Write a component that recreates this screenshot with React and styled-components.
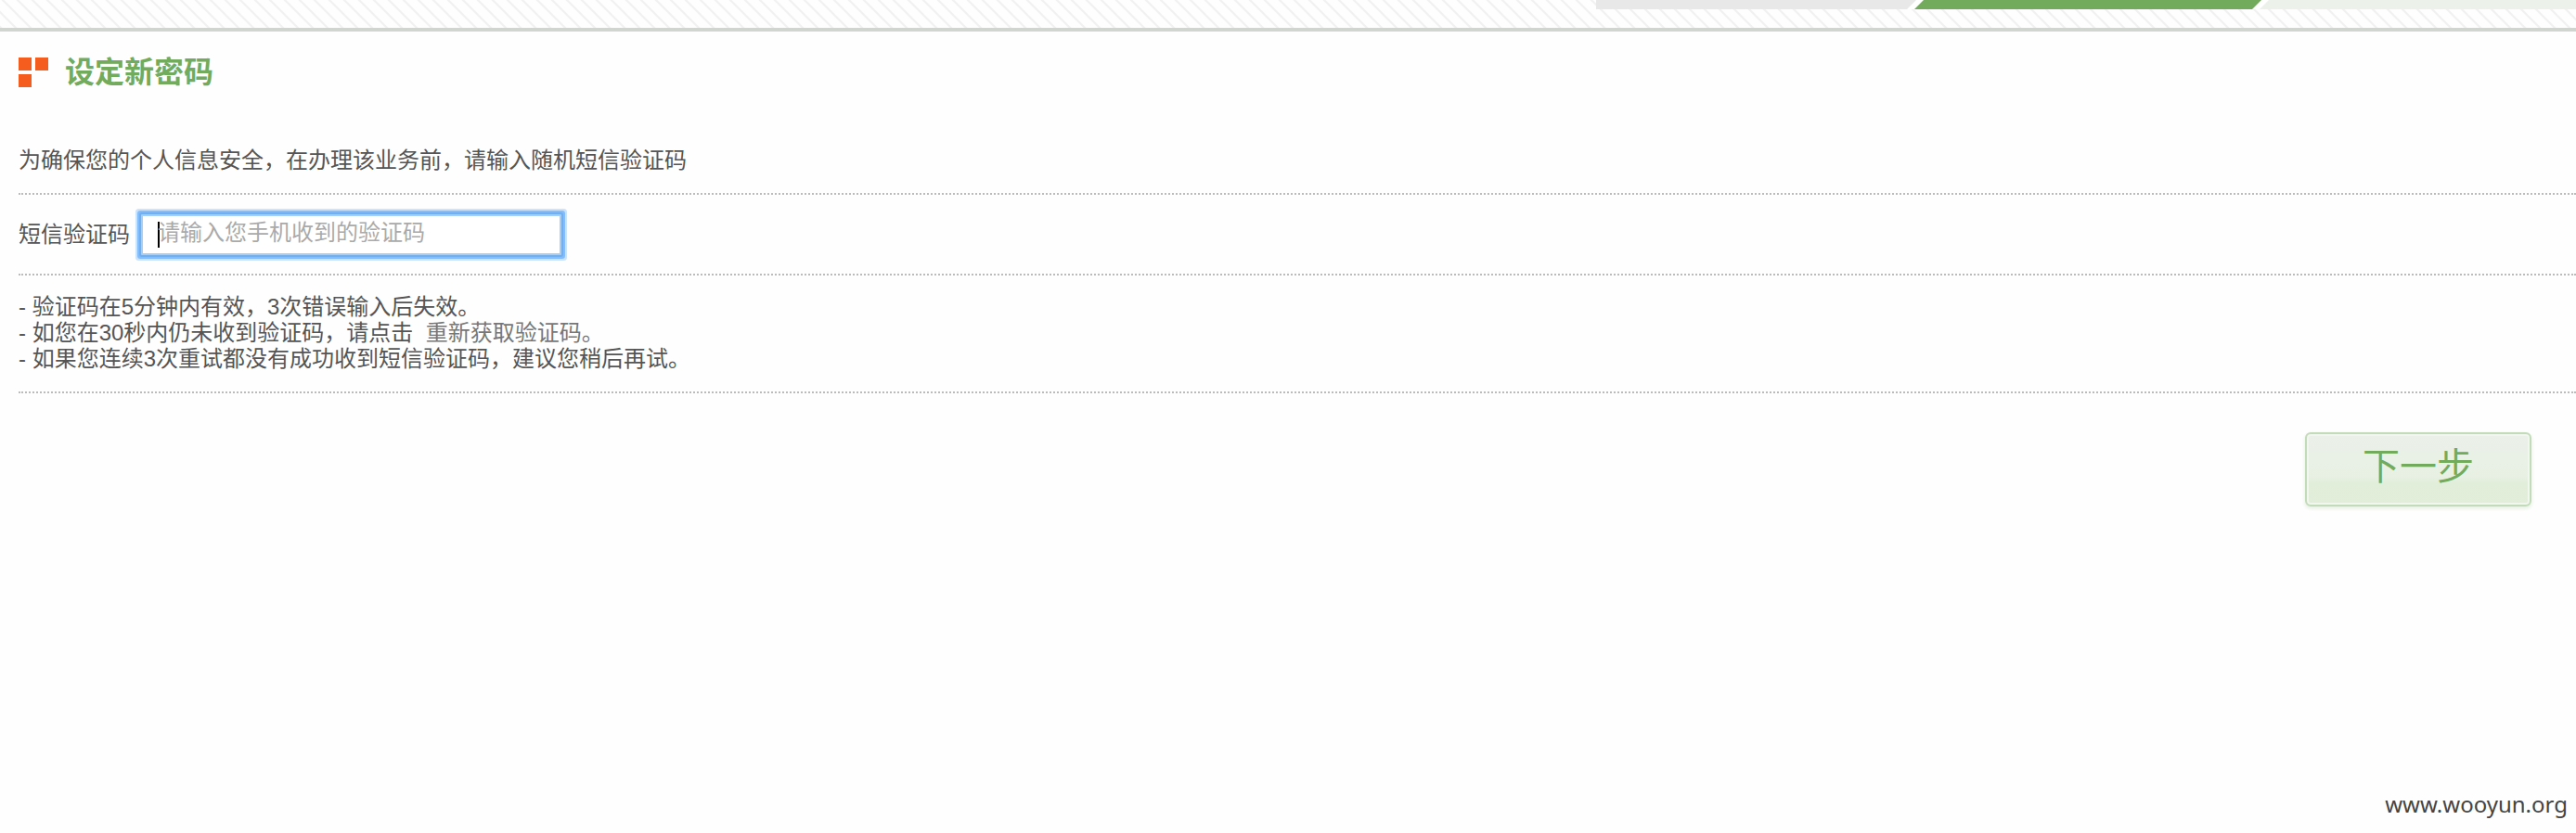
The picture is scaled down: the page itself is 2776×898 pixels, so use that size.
import React from "react";
import styled, { createGlobalStyle } from "styled-components";

const GlobalStyle = createGlobalStyle`
  * { box-sizing: border-box; }
  body {
    margin: 0;
    background: #fefefe;
    color: #555;
    font: 24px/28px "Liberation Sans", "Noto Sans CJK SC", sans-serif;
  }
  #root { min-height: 100vh; display: flex; }
`;

const Page = styled.div`
  flex: 1;
  min-height: 100vh;
  display: flex;
  flex-direction: column;
`;

const StepBar = styled.header`
  height: 34px;
  border-bottom: 4px solid #d0d5cf;
  display: flex;
  justify-content: flex-end;
  align-items: flex-start;
  overflow: hidden;
  background: url("data:image/svg+xml,%3Csvg xmlns='http://www.w3.org/2000/svg' width='16' height='16'%3E%3Crect width='16' height='16' fill='%23fefefe'/%3E%3Cpath d='M-4 -4L20 20M-4 12L4 20M12 -4L20 4' stroke='%23f1f1f1' stroke-width='2'/%3E%3C/svg%3E") 3px 0;
`;

const Steps = styled.svg`
  display: block;
  width: 1056px;
  height: 10px;
  flex: none;
`;

const Main = styled.main`
  padding-left: 20px;
`;

const Title = styled.h1`
  margin: 0;
  padding: 22px 0 0;
  height: 108px;
  display: flex;
  align-items: flex-start;
  gap: 18px;
  color: #71ab5b;
  font-size: 32px;
  line-height: 44px;
  font-weight: 700;
  svg { margin-top: 6px; }
`;

const Section = styled.section`
  padding: ${(p) => p.$pad};
  border-bottom: 2px dotted #bbb;
  p { margin: 0; }
`;

const Field = styled.div`
  display: flex;
  align-items: center;
  gap: 12px;
`;

const CodeInput = styled.input`
  width: 453px;
  height: 44px;
  margin: 0;
  padding: 0 16px 4px;
  border: 2px solid #a5cffb;
  outline: none;
  background: #fff;
  box-shadow: 0 0 0 2px #70b0f2, 0 0 0 4px #84bdfa, 0 0 0 6px #cce3fd;
  border-radius: 1px;
  font: inherit;
  color: #555;
  caret-color: #000;
  &::placeholder { color: #aaa; opacity: 1; }
  &:placeholder-shown {
    caret-color: transparent;
    background: linear-gradient(#000, #000) 16px 6px / 2px 28px no-repeat #fff;
  }
`;

const Notes = styled.ul`
  list-style: none;
  margin: 0;
  padding: 0;
`;

const Resend = styled.a`
  color: #777;
  text-decoration: none;
`;

const Actions = styled.div`
  display: flex;
  justify-content: flex-end;
  padding: 42px 48px 0 0;
`;

const NextButton = styled.button`
  width: 244px;
  height: 80px;
  padding: 0 0 6px;
  border: 2px solid #c2dbb9;
  border-radius: 6px;
  background: linear-gradient(#ebf0e9, #e8f0e4 60%, #e1eed9 70%, #e2edda);
  box-shadow: inset 0 0 0 2px #f1f6ee, 0 2px 4px #e2eede;
  color: #71ab5b;
  font: 400 40px/56px "Liberation Sans", "Noto Sans CJK SC", sans-serif;
`;

const Footer = styled.footer`
  margin-top: auto;
  padding: 0 9px 15px;
  text-align: right;
  color: #444;
  font: 24px/32px "Noto Sans", sans-serif;
`;

export default function App() {
  return (
    <Page>
      <GlobalStyle />
      <StepBar>
        <Steps viewBox="0 0 1056 10" aria-hidden="true">
          <path d="M0 0H1056V10H0Z" fill="#fff" />
          <path d="M0 0H345L335 10H0Z" fill="#e8e8e8" />
          <path d="M353 0H717L707 10H343Z" fill="#71ab5b" />
          <path d="M725 0H1056V10H715Z" fill="#ecf1ea" />
        </Steps>
      </StepBar>
      <Main>
        <Title>
          <svg width="32" height="32" viewBox="0 0 32 32" fill="#f45d1e" aria-hidden="true">
            <path d="M0 0H14V14H0ZM18 0H32V14H18ZM0 18H14V32H0Z" />
          </svg>
          设定新密码
        </Title>
        <Section $pad="17px 0 21px">
          <p>为确保您的个人信息安全，在办理该业务前，请输入随机短信验证码</p>
        </Section>
        <Section $pad="21px 0 20px">
          <Field>
            <label htmlFor="code">短信验证码</label>
            <CodeInput id="code" type="text" placeholder="请输入您手机收到的验证码" autoFocus />
          </Field>
        </Section>
        <Section $pad="20px 0 21px">
          <Notes>
            <li>- 验证码在5分钟内有效，3次错误输入后失效。</li>
            <li>- 如您在30秒内仍未收到验证码，请点击 &nbsp;<Resend href="#resend">重新获取验证码。</Resend></li>
            <li>- 如果您连续3次重试都没有成功收到短信验证码，建议您稍后再试。</li>
          </Notes>
        </Section>
        <Actions>
          <NextButton type="button">下一步</NextButton>
        </Actions>
      </Main>
      <Footer>www.wooyun.org</Footer>
    </Page>
  );
}
